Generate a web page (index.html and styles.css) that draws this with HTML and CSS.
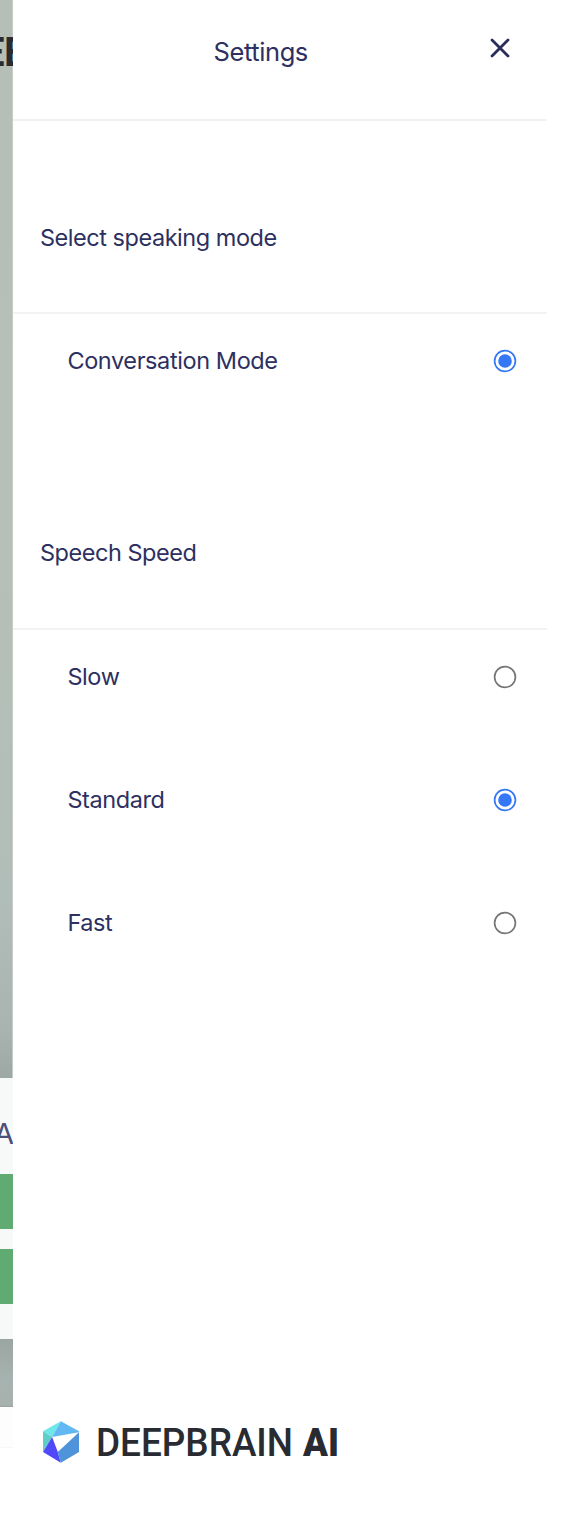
FILE: index.html
```
<!DOCTYPE html>
<html lang="en">
<head>
<meta charset="utf-8">
<title>Settings</title>
<link rel="stylesheet" href="styles.css">
</head>
<body>
<div class="app">
  <div class="backdrop">
    <div class="scene"><span class="brand-behind">DEE</span></div>
    <div class="chat">
      <div class="chat-title"><span>A</span></div>
      <div class="chat-button"></div>
      <div class="chat-button"></div>
    </div>
    <div class="floor"></div>
    <div class="input-bar"></div>
  </div>
  <main class="panel">
    <header class="header">
      <h1 class="title">Settings</h1>
      <svg class="close" viewBox="0 0 20 20"><path d="M2 2L18 18M18 2L2 18"/></svg>
    </header>
    <section class="group group-mode">
      <h2 class="heading">Select speaking mode</h2>
      <label class="option"><span>Conversation Mode</span><svg class="radio checked" viewBox="0 0 24 24"><circle class="ring" cx="12" cy="12" r="10.4"/><circle class="dot" cx="12" cy="12" r="6.8"/></svg></label>
    </section>
    <section class="group group-speed">
      <h2 class="heading">Speech Speed</h2>
      <label class="option"><span>Slow</span><svg class="radio" viewBox="0 0 24 24"><circle class="ring" cx="12" cy="12" r="10.4"/></svg></label>
      <label class="option"><span>Standard</span><svg class="radio checked" viewBox="0 0 24 24"><circle class="ring" cx="12" cy="12" r="10.4"/><circle class="dot" cx="12" cy="12" r="6.8"/></svg></label>
      <label class="option"><span>Fast</span><svg class="radio" viewBox="0 0 24 24"><circle class="ring" cx="12" cy="12" r="10.4"/></svg></label>
    </section>
    <footer class="footer">
      <svg class="mark" viewBox="21 18 107 124">
        <path fill="#6ee7e8" d="M21 48L74 18L48 65Z"/>
        <path fill="#61b8f2" d="M74 18L128 48V51L48 65Z"/>
        <path fill="#5dcfcb" d="M21 48L48 65L21 110Z"/>
        <path fill="#5148f8" d="M48 65L65 110L74 142L21 110Z"/>
        <path fill="#4f94da" d="M128 51V110L74 142L65 110Z"/>
      </svg>
      <svg class="wordmark" viewBox="0 0 244 40">
        <text class="word" x="0" y="34" textLength="197" lengthAdjust="spacingAndGlyphs">DEEPBRAIN</text>
        <text class="word bold" x="207" y="34" textLength="36" lengthAdjust="spacingAndGlyphs">AI</text>
      </svg>
    </footer>
  </main>
</div>
</body>
</html>
```
FILE: styles.css
```
* { box-sizing: border-box; }
body { margin: 0; background: #fff; font-family: Inter, sans-serif; color: #2d3060; }
.app { display: flex; width: 576px; height: 1530px; overflow: hidden; }

.backdrop { width: 13px; flex: none; overflow: hidden; }
.scene {
  height: 1078px; padding-top: 28px; display: flex; justify-content: flex-end; align-items: flex-start;
  background: linear-gradient(#b5beb7 0, #b7c0b8 500px, #b1bdb8 900px, #a9b4b0 1030px, #9da7a3 1078px);
  border-right: 1px solid #c5ccc6;
}
.brand-behind { font: 700 40px/50px Roboto, sans-serif; letter-spacing: -0.5px; color: #292b32; margin-right: -14px; }
.chat { height: 261px; background: #f7f9f8; }
.chat-title { height: 96.4px; padding-top: 37px; display: flex; justify-content: flex-end; font-size: 29px; line-height: 38px; color: #4b4e78; }
.chat-title span { margin-right: -1px; }
.chat-button { height: 55px; margin-bottom: 19.6px; background: #5fab72; }
.floor { height: 68px; background: linear-gradient(#9ba5a1, #a7b3b0 60%, #a7b1ae 97%, #98a29f); }
.input-bar { height: 41px; background: #fdfdfd; border-bottom: 1px solid #f7f7f7; }

.panel { width: 534px; flex: none; display: flex; flex-direction: column; }
.header { height: 121px; border-bottom: 2px solid #f1f1f6; display: flex; padding: 36px 37px 0 200.5px; justify-content: space-between; align-items: flex-start; }
.title { margin: 0; font-size: 25.5px; font-weight: 400; line-height: 32px; letter-spacing: -0.4px; }
.close { width: 20px; height: 20px; margin-top: 2px; overflow: visible; fill: none; stroke: #292d59; stroke-width: 2.8; stroke-linecap: round; }
.group-mode { height: 315px; }
.heading { margin: 0; height: 193px; padding: 101px 0 0 27px; font-size: 23.5px; font-weight: 400; line-height: 32px; letter-spacing: -0.47px; border-bottom: 2px solid #f3f3f5; }
.group-speed .heading { height: 194px; }
.option { height: 123px; padding: 31px 30.5px 0 54.4px; display: flex; justify-content: space-between; align-items: flex-start; font-size: 23.5px; line-height: 32px; letter-spacing: -0.4px; }
.radio { width: 24px; height: 24px; margin-top: 4px; fill: none; }
.ring { stroke: #767676; stroke-width: 1.7; }
.checked .ring { stroke: #3478f6; }
.dot { fill: #3478f6; }
.footer { margin-top: auto; height: 109px; padding-left: 30px; display: flex; align-items: flex-start; }
.mark { width: 36px; height: 42px; }
.wordmark { width: 244px; height: 40px; margin: 1px 0 0 17px; overflow: visible; }
.word { font: 500 39px Roboto, sans-serif; fill: #292b32; }
.word.bold { font-weight: 900; }
```
